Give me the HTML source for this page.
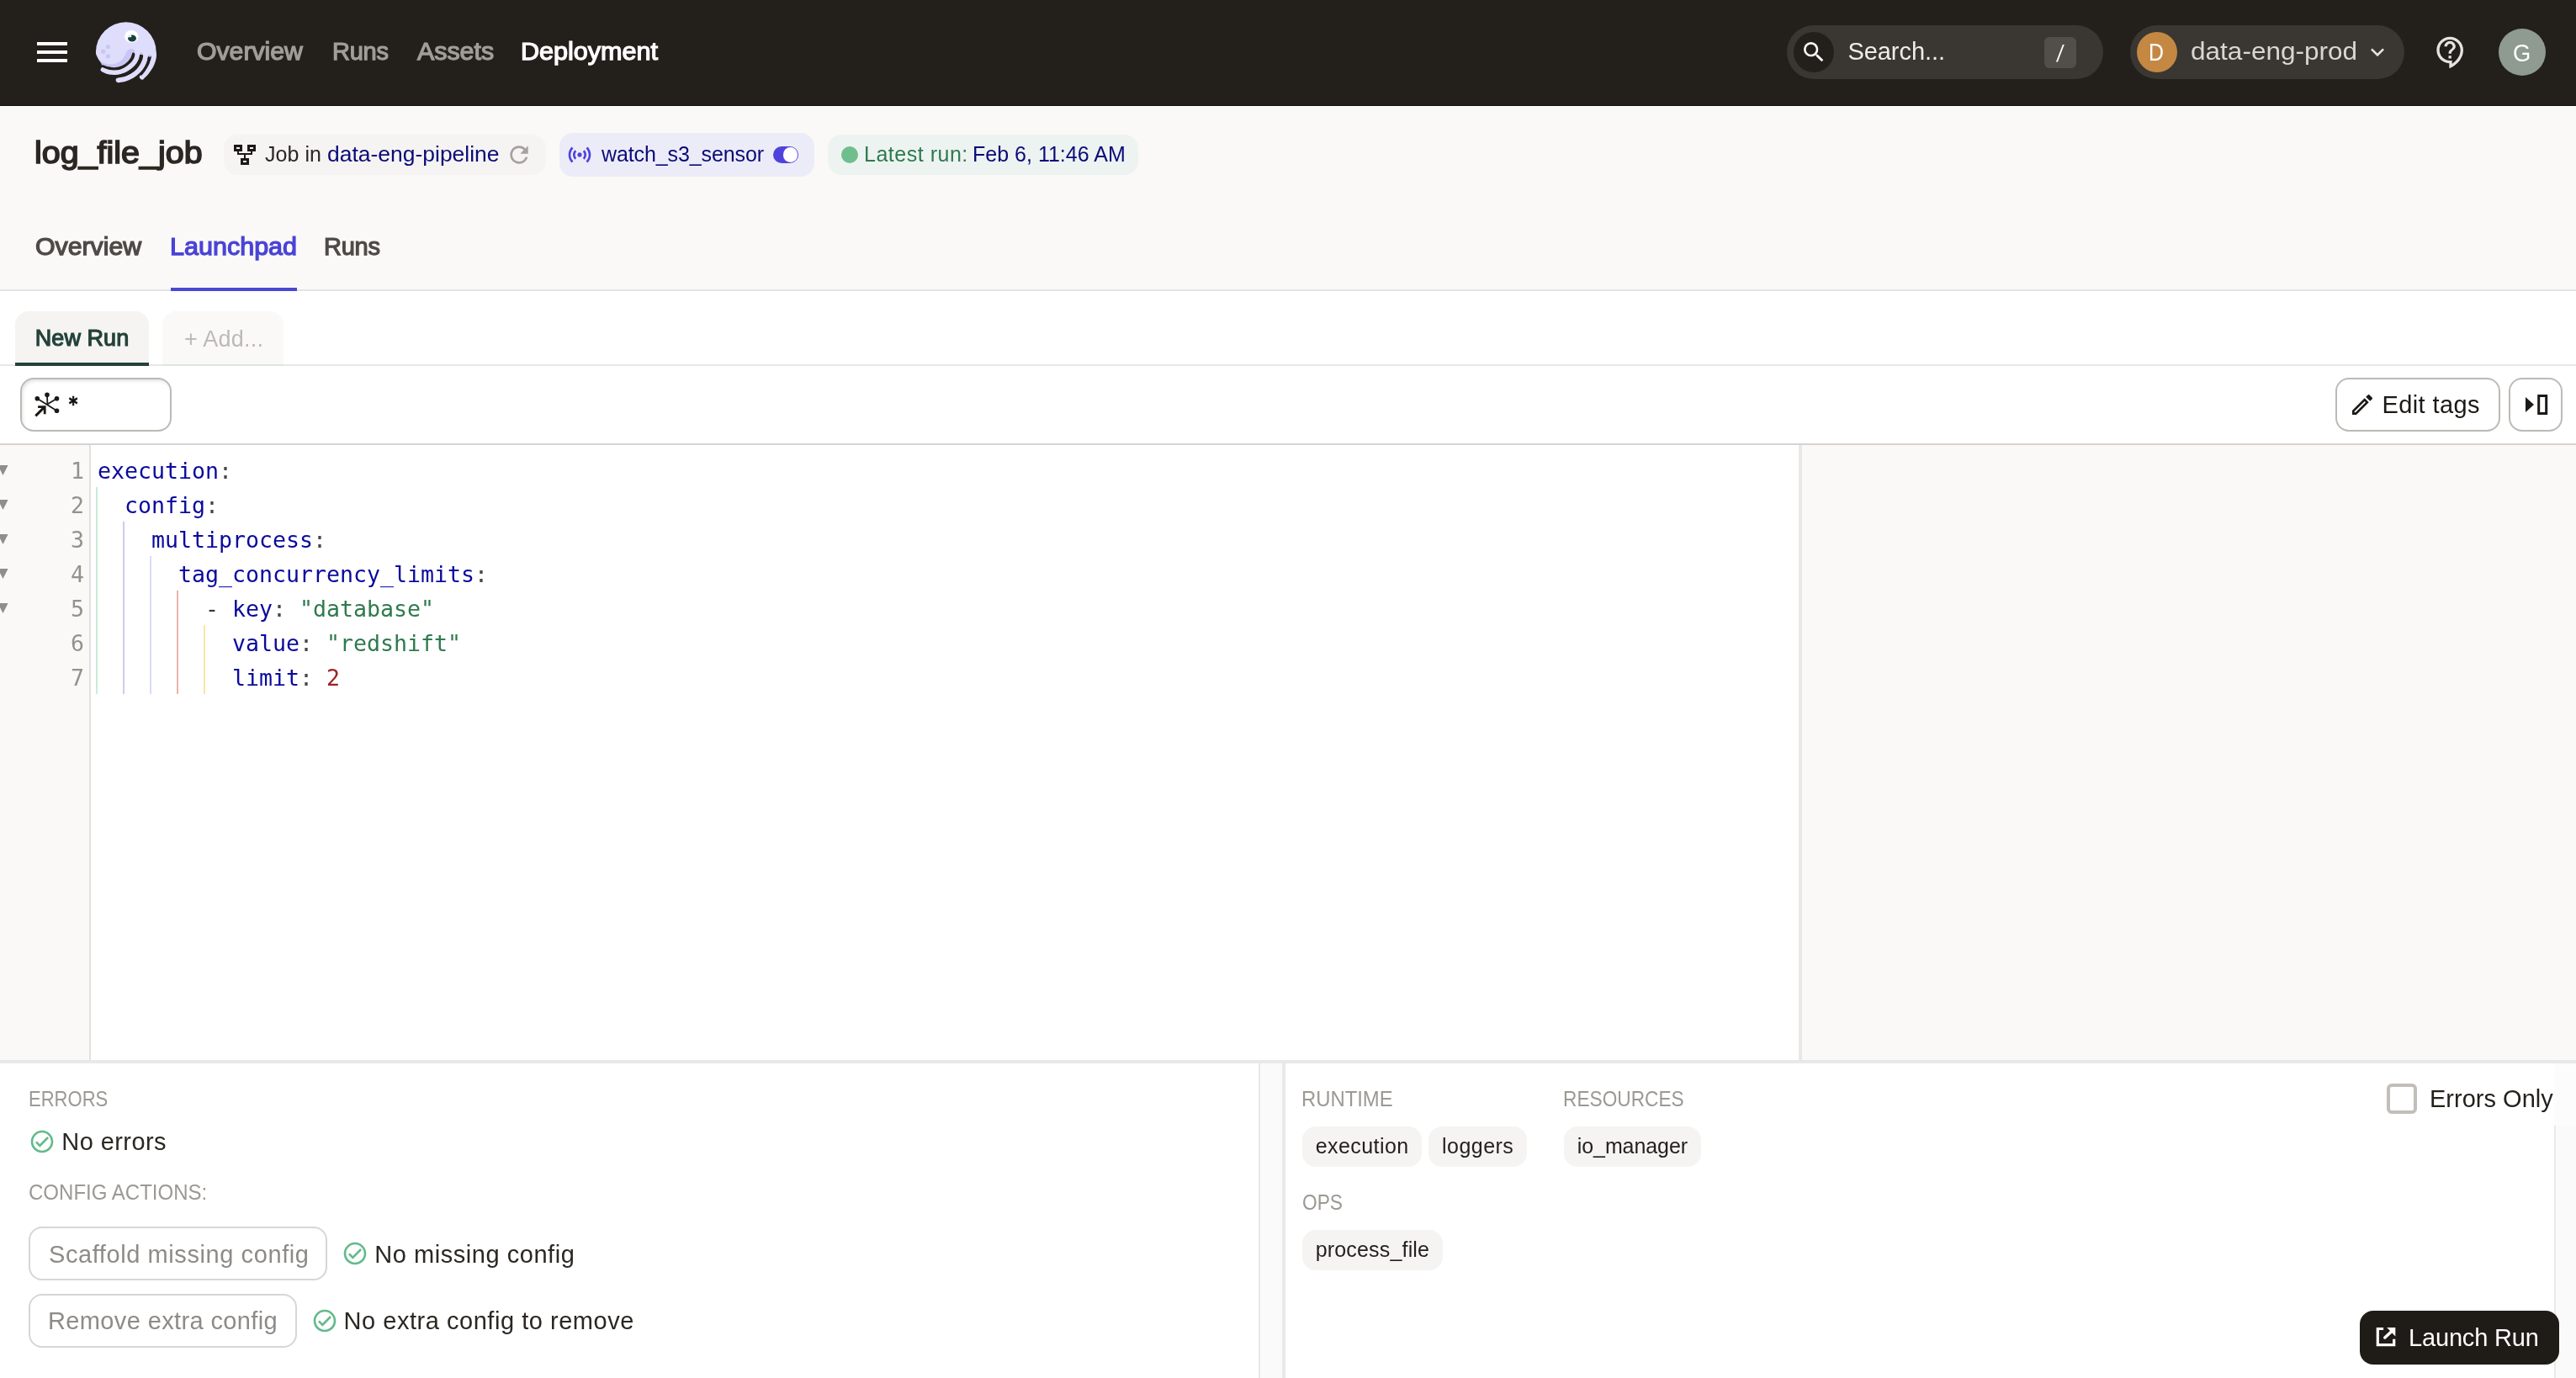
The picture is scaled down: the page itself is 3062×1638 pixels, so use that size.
<!DOCTYPE html>
<html lang="en"><head><meta charset="utf-8"><title>log_file_job - Launchpad</title>
<style>
html,body{margin:0;padding:0;}
body{width:3062px;height:1638px;position:relative;overflow:hidden;background:#fff;font-family:"Liberation Sans",sans-serif;color:#231F1B;}
.a{position:absolute;box-sizing:border-box;}
.t{position:absolute;white-space:pre;display:block;}
svg{position:absolute;overflow:visible;}
.code{position:absolute;margin:0;white-space:pre;font-family:"DejaVu Sans Mono","Liberation Mono",monospace;font-size:26.58px;line-height:41px;height:41px;}
.k{color:#0A0A9E;} .p{color:#4A4743;} .s{color:#2F7A4E;} .n{color:#A02222;} .d{color:#3A3631;}
.ln{position:absolute;left:0;width:100px;text-align:right;color:#95928E;font-family:"DejaVu Sans Mono","Liberation Mono",monospace;font-size:26.58px;line-height:41px;height:41px;}
.pill{position:absolute;box-sizing:border-box;background:#F5F4F2;border-radius:16px;height:48px;}
.tl{position:absolute;left:0;top:0;width:3062px;height:1638px;will-change:transform;}

</style></head>
<body>
<!-- top nav -->
<div class="a" style="left:0;top:0;width:3062px;height:126px;background:#231F1B;border-bottom:1px solid #15120E;"></div>
<!-- hamburger -->
<svg style="left:38px;top:38px" width="48" height="48" viewBox="0 0 24 24"><path d="M3 18h18v-2H3v2zm0-5h18v-2H3v2zm0-7v2h18V6H3z" fill="#fff"/></svg>
<!-- logo -->
<svg style="left:100px;top:14px" width="100" height="96" viewBox="0 0 100 96"><defs><clipPath id="lc"><circle cx="49.8" cy="48.1" r="35.9"/></clipPath></defs><circle cx="49.8" cy="48.1" r="35.9" fill="#DEDDFB"/><path d="M60.8 48.8C60.5 48.3 60.3 46.3 59.4 45.4C58.5 44.6 56.7 43.7 55.3 43.9C53.9 44.1 52.3 45.2 51.1 46.6C50.0 47.9 49.7 50.0 48.5 51.8C47.3 53.7 46.0 56.3 44.0 57.9C41.9 59.5 39.2 61.0 36.4 61.7C33.6 62.4 29.8 62.5 27.0 62.0C24.2 61.5 21.4 60.3 19.4 58.6C17.4 57.0 16.1 54.1 14.9 52.2C13.7 50.3 12.7 48.1 12.3 47.3L-5 100L100 100L66.6 48.8Z" fill="#C9C6F5" clip-path="url(#lc)"/><circle cx="28.4" cy="41.5" r="2.6" fill="#C9C6F5"/><circle cx="22.6" cy="47.2" r="2.6" fill="#C9C6F5"/><circle cx="28.4" cy="52.8" r="2.6" fill="#C9C6F5"/><path d="M58.5 50.0C58.2 50.8 57.8 53.1 56.8 54.9C55.8 56.6 54.5 58.8 52.6 60.5C50.8 62.3 48.6 64.2 45.8 65.4C43.1 66.6 39.4 67.5 36.4 67.7C33.5 67.9 30.4 67.1 28.1 66.6C25.8 66.1 23.8 65.7 22.5 64.7C21.1 63.7 20.9 62.3 19.7 60.5C18.6 58.8 16.8 56.3 15.7 54.1C14.5 51.9 13.8 49.7 12.6 47.3C11.4 44.9 9.2 41.0 8.5 39.8L-5.0 100.0L100.0 100.0L100.0 53.7L89.2 53.7Z" fill="#231F1B"/><path d="M22.5 68.8C23.5 69.3 26.5 70.9 28.9 71.5C31.2 72.0 33.9 72.3 36.4 72.2C38.9 72.2 41.4 71.9 44.0 71.1C46.5 70.3 49.1 68.9 51.5 67.3C53.9 65.7 56.5 63.6 58.3 61.7C60.1 59.7 61.3 57.4 62.1 55.6C62.9 53.9 63.0 52.5 63.2 51.1C63.4 49.7 63.4 47.9 63.4 47.3" fill="none" stroke="#DEDDFB" stroke-width="5.7" stroke-linecap="round"/><path d="M40.6 81.3C41.8 81.1 45.0 81.0 47.7 80.2C50.5 79.3 54.3 77.7 57.2 76.0C60.0 74.3 62.6 72.1 64.7 70.0C66.8 67.8 68.4 65.3 69.6 63.2C70.9 61.0 71.7 58.8 72.3 57.1C72.8 55.4 72.9 54.4 73.0 53.0C73.2 51.6 73.1 49.5 73.1 48.8" fill="none" stroke="#DEDDFB" stroke-width="5.9" stroke-linecap="round"/><path d="M68.9 77.5C69.7 76.6 72.5 74.0 74.2 71.8C75.8 69.7 77.8 66.9 79.1 64.7C80.3 62.5 81.1 60.4 81.7 58.6C82.3 56.9 82.6 55.5 82.8 54.1C83.1 52.7 83.0 51.0 83.0 50.3" fill="none" stroke="#DEDDFB" stroke-width="6.0" stroke-linecap="round"/><circle cx="68.3" cy="49.6" r="1.7" fill="#C9C6F5"/><circle cx="77.7" cy="52.4" r="1.7" fill="#C9C6F5"/><path d="M58.5 50.0C58.2 50.8 57.8 53.1 56.8 54.9C55.8 56.6 54.5 58.8 52.6 60.5C50.8 62.3 48.6 64.2 45.8 65.4C43.1 66.6 39.4 67.5 36.4 67.7C33.5 67.9 30.4 67.1 28.1 66.6C25.8 66.1 23.4 65.0 22.5 64.7" fill="none" stroke="#231F1B" stroke-width="3" stroke-linecap="round"/><path d="M67.7 52.2C67.4 53.4 67.0 56.9 65.8 59.4C64.7 61.8 63.0 64.7 60.9 66.9C58.9 69.1 56.2 71.2 53.4 72.6C50.6 74.1 46.3 74.9 44.0 75.6C41.6 76.3 40.2 76.7 39.4 76.9" fill="none" stroke="#231F1B" stroke-width="3" stroke-linecap="round"/><path d="M77.2 54.9C76.9 56.0 76.5 59.3 75.7 61.7C74.8 64.0 73.2 66.8 71.9 68.8C70.6 70.9 68.4 73.2 67.7 74.1" fill="none" stroke="#231F1B" stroke-width="3" stroke-linecap="round"/><ellipse cx="56.3" cy="29.3" rx="8.2" ry="7.4" fill="#fff"/><path d="M48.6 32.0L65.0 32.0L65.0 38.0L48.6 38.0Z" fill="#DEDDFB" opacity="0"/><ellipse cx="57.0" cy="31.5" rx="5" ry="4" fill="#1A3F3F"/><path d="M51.5 30.5L55.5 27.2L56.5 30.0Z" fill="#fff"/></svg>
<!-- search -->
<div class="a" style="left:2124px;top:30px;width:376px;height:64px;border-radius:32px;background:#3A3631;"></div>
<div class="a" style="left:2132px;top:38px;width:48px;height:48px;border-radius:24px;background:#231F1B;"></div>
<svg style="left:2140px;top:46px" width="32" height="32" viewBox="0 0 24 24"><path d="M15.5 14h-.79l-.28-.27A6.471 6.471 0 0 0 16 9.5 6.5 6.5 0 1 0 9.5 16c1.61 0 3.09-.59 4.23-1.57l.27.28v.79l5 4.99L20.49 19l-4.99-5zm-6 0C7.01 14 5 11.99 5 9.5S7.01 5 9.5 5 14 7.01 14 9.5 11.99 14 9.5 14z" fill="#fff"/></svg>
<div class="a" style="left:2430px;top:44px;width:38px;height:37px;border-radius:6px;background:#524E49;"></div>
<!-- deployment pill -->
<div class="a" style="left:2532px;top:30px;width:326px;height:64px;border-radius:32px;background:#3A3631;"></div>
<div class="a" style="left:2540px;top:38px;width:48px;height:48px;border-radius:24px;background:#C48843;"></div>
<svg style="left:2810px;top:46px" width="32" height="32" viewBox="0 0 24 24"><path d="M16.59 8.59L12 13.17 7.41 8.59 6 10l6 6 6-6z" fill="#E5E3E0"/></svg>
<!-- help -->
<svg style="left:2892.7px;top:41.7px" width="40" height="40" viewBox="0 0 24 24"><path d="M11 23.59v-3.6c-5.01-.26-9-4.42-9-9.49C2 5.26 6.26 1 11.5 1S21 5.26 21 10.5c0 4.95-3.44 9.93-8.57 12.4l-1.43.69zM11.5 3C7.36 3 4 6.36 4 10.5S7.36 18 11.5 18H13v2.3c3.64-2.3 6-6.08 6-9.8C19 6.36 15.64 3 11.5 3zm-1 11.5h2v2h-2zm2-1.500h-2c0-3.250 3-3 3-5 0-1.100-.9-2-2-2s-2 .9-2 2h-2c0-2.210 1.790-4 4-4s4 1.790 4 4c0 2.500-3 2.750-3 5z" fill="#E5E3E0"/></svg>
<!-- avatar -->
<div class="a" style="left:2970px;top:34px;width:56px;height:56px;border-radius:28px;background:#8F9A90;"></div>

<!-- page header -->
<div class="a" style="left:0;top:126px;width:3062px;height:220px;background:#FAF9F7;border-top:1px solid #fff;border-bottom:2px solid #E4E4E3;"></div>
<div class="a" style="left:266px;top:160px;width:383px;height:48px;border-radius:16px;background:#F5F4F2;"></div>
<div class="a" style="left:665px;top:158px;width:303px;height:52px;border-radius:16px;background:#ECECF8;"></div>
<div class="a" style="left:984px;top:160px;width:369px;height:48px;border-radius:16px;background:#EDF3F1;"></div>
<!-- switch -->
<div class="a" style="left:919px;top:174px;width:30px;height:20px;border-radius:10px;background:#4F43DD;"></div>
<div class="a" style="left:931.2px;top:175.4px;width:17.2px;height:17.2px;border-radius:9px;background:#fff;"></div>
<!-- green dot -->
<div class="a" style="left:1000px;top:174px;width:20px;height:20px;border-radius:10px;background:#6FBF8E;"></div>

<!-- tab underline -->
<div class="a" style="left:203px;top:342px;width:150px;height:4px;background:#4B47D5;"></div>

<!-- sub tabs -->
<div class="a" style="left:0;top:433px;width:3062px;height:2px;background:#E7E7E5;"></div>
<div class="a" style="left:18px;top:370px;width:159px;height:65px;border-radius:16px 16px 0 0;background:#F5F4F2;border-bottom:4px solid #25413A;"></div>
<div class="a" style="left:193px;top:370px;width:144px;height:65px;border-radius:16px 16px 0 0;background:#FAF9F7;border-bottom:2px solid #DCE5E0;"></div>

<!-- toolbar -->
<div class="a" style="left:24px;top:449px;width:180px;height:64px;border-radius:16px;border:2px solid #BDBAB6;background:#fff;box-shadow:inset 2px 3px 5px -2px rgba(0,0,0,0.16);"></div>
<div class="a" style="left:2776px;top:449px;width:196px;height:64px;border-radius:16px;border:2px solid #BDBAB6;background:#fff;"></div>
<div class="a" style="left:2982px;top:449px;width:64px;height:64px;border-radius:16px;border:2px solid #BDBAB6;background:#fff;"></div>
<svg style="left:3000px;top:467px" width="30" height="28" viewBox="0 0 30 28"><path d="M2 5 L12 14 L2 23 Z" fill="#1C1917"/><rect x="17.7" y="3.5" width="9" height="21" fill="none" stroke="#1C1917" stroke-width="3"/></svg>
<div class="a" style="left:0;top:527px;width:3062px;height:2px;background:#D6D4D1;"></div>

<!-- editor -->
<div class="a" style="left:0;top:529px;width:108px;height:731px;background:#FAF9F7;border-right:2px solid #E3E1DE;"></div>
<div class="a" style="left:2138px;top:529px;width:4px;height:731px;background:#E8E8E8;"></div>
<div class="a" style="left:2142px;top:529px;width:920px;height:731px;background:#FAF9F7;"></div>
<!-- indent guides -->
<div class="a" style="left:114px;top:579px;width:2px;height:246px;background:#C9EBD9;"></div>
<div class="a" style="left:146px;top:620px;width:2px;height:205px;background:#CDCDEB;"></div>
<div class="a" style="left:178px;top:661px;width:2px;height:164px;background:#DADAFA;"></div>
<div class="a" style="left:210px;top:702px;width:2px;height:123px;background:#E8B4AE;"></div>
<div class="a" style="left:242px;top:743px;width:2px;height:82px;background:#F8E6A8;"></div>
<!-- fold arrows + line numbers -->
<svg style="left:0;top:553.1px" width="12" height="13" viewBox="0 0 12 13"><path d="M-2.600 0H9.600L3.500 11.900Z" fill="#8E8E8E"/></svg>
<svg style="left:0;top:594.1px" width="12" height="13" viewBox="0 0 12 13"><path d="M-2.600 0H9.600L3.500 11.900Z" fill="#8E8E8E"/></svg>
<svg style="left:0;top:635.1px" width="12" height="13" viewBox="0 0 12 13"><path d="M-2.600 0H9.600L3.500 11.900Z" fill="#8E8E8E"/></svg>
<svg style="left:0;top:676.1px" width="12" height="13" viewBox="0 0 12 13"><path d="M-2.600 0H9.600L3.500 11.900Z" fill="#8E8E8E"/></svg>
<svg style="left:0;top:717.1px" width="12" height="13" viewBox="0 0 12 13"><path d="M-2.600 0H9.600L3.500 11.900Z" fill="#8E8E8E"/></svg>
<div class="tl">
<div class="ln" style="top:538.6px">1</div>
<div class="ln" style="top:579.6px">2</div>
<div class="ln" style="top:620.6px">3</div>
<div class="ln" style="top:661.6px">4</div>
<div class="ln" style="top:702.6px">5</div>
<div class="ln" style="top:743.6px">6</div>
<div class="ln" style="top:784.6px">7</div>
<pre class="code" style="left:115.9px;top:538.6px"><span class="k">execution</span><span class="p">:</span></pre>
<pre class="code" style="left:115.9px;top:579.6px">  <span class="k">config</span><span class="p">:</span></pre>
<pre class="code" style="left:115.9px;top:620.6px">    <span class="k">multiprocess</span><span class="p">:</span></pre>
<pre class="code" style="left:115.9px;top:661.6px">      <span class="k">tag_concurrency_limits</span><span class="p">:</span></pre>
<pre class="code" style="left:115.9px;top:702.6px">        <span class="d">-</span> <span class="k">key</span><span class="p">:</span> <span class="s">"database"</span></pre>
<pre class="code" style="left:115.9px;top:743.6px">          <span class="k">value</span><span class="p">:</span> <span class="s">"redshift"</span></pre>
<pre class="code" style="left:115.9px;top:784.6px">          <span class="k">limit</span><span class="p">:</span> <span class="n">2</span></pre>
</div>

<!-- bottom split -->
<div class="a" style="left:0;top:1260px;width:3062px;height:4px;background:#E8E8E8;"></div>
<div class="a" style="left:1496px;top:1264px;width:2px;height:374px;background:#E8E8E8;"></div>
<div class="a" style="left:1498px;top:1264px;width:26px;height:374px;background:#FAFAFA;"></div>
<div class="a" style="left:1524px;top:1264px;width:4px;height:374px;background:#E8E8E8;"></div>
<div class="a" style="left:3036px;top:1264px;width:26px;height:74px;background:#FCFCFC;"></div>
<div class="a" style="left:3036px;top:1338px;width:26px;height:300px;background:#FAFAFA;border-left:2px solid #EAEAEA;"></div>

<!-- bottom-left -->
<div class="a" style="left:34px;top:1458px;width:355px;height:64px;border-radius:16px;border:2px solid #D8D6D3;background:#fff;"></div>
<div class="a" style="left:34px;top:1538px;width:319px;height:64px;border-radius:16px;border:2px solid #D8D6D3;background:#fff;"></div>

<!-- bottom-right pills -->
<div class="pill" style="left:1548px;top:1339px;width:142px;"></div>
<div class="pill" style="left:1698px;top:1339px;width:117px;"></div>
<div class="pill" style="left:1859px;top:1339px;width:163px;"></div>
<div class="pill" style="left:1548px;top:1462px;width:167px;"></div>
<!-- checkbox -->
<div class="a" style="left:2837px;top:1288px;width:36px;height:36px;border-radius:6px;border:4px solid #C2BFBB;background:#fff;"></div>
<!-- launch button -->
<div class="a" style="left:2805px;top:1558px;width:237px;height:64px;border-radius:16px;background:#1F1C18;"></div>
<svg style="left:2820px;top:1574px" width="32" height="32" viewBox="2820 1574 32 32"><path d="M2833.100 1579.500H2826.300V1598.600H2845.700V1591.800" fill="none" stroke="#fff" stroke-width="3.200"/><path d="M2837.200 1577.900H2847.300V1588.400Z" fill="#fff"/><path d="M2834.800 1590L2843.500 1582" fill="none" stroke="#fff" stroke-width="3.500" stroke-linecap="round"/></svg>
<!-- job icon -->
<svg style="left:270px;top:160px" width="48" height="48" viewBox="270 160 48 48"><g fill="none" stroke="#1C1917"><rect x="279.5" y="173.5" width="7" height="5" stroke-width="3"/><rect x="295.5" y="173.5" width="7" height="5" stroke-width="3"/><rect x="287.500" y="189.500" width="7" height="5" stroke-width="3"/><path d="M283 180V183H299V180M291 183V188" stroke-width="2"/></g></svg>
<!-- refresh -->
<svg style="left:600.700px;top:167.700px" width="32" height="32" viewBox="0 0 24 24"><path d="M17.65 6.35A7.958 7.958 0 0 0 12 4c-4.42 0-7.990 3.580-7.990 8s3.570 8 7.990 8c3.730 0 6.840-2.550 7.730-6h-2.080A5.990 5.990 0 0 1 12 18c-3.310 0-6-2.690-6-6s2.690-6 6-6c1.660 0 3.140.69 4.220 1.780L13 11h7V4l-2.350 2.350z" fill="#A5A19D"/></svg>
<!-- sensor -->
<svg style="left:672.700px;top:167.800px" width="32" height="32" viewBox="0 0 24 24"><path d="M7.760 16.240C6.670 15.160 6 13.660 6 12s.67-3.160 1.760-4.240l1.420 1.420C8.450 9.900 8 10.900 8 12c0 1.100.45 2.100 1.170 2.830l-1.410 1.410zm8.480 0C17.330 15.160 18 13.660 18 12s-.67-3.160-1.760-4.240l-1.420 1.420C15.550 9.900 16 10.900 16 12c0 1.100-.45 2.100-1.170 2.830l1.410 1.410zM12 10c-1.100 0-2 .9-2 2s.9 2 2 2 2-.9 2-2-.9-2-2-2zm8 2c0 2.210-.9 4.210-2.350 5.650l1.420 1.420C20.880 17.260 22 14.760 22 12s-1.120-5.260-2.930-7.070l-1.420 1.420C19.100 7.790 20 9.790 20 12zM6.350 6.350L4.930 4.930C3.120 6.740 2 9.240 2 12s1.120 5.260 2.930 7.070l1.420-1.420C4.900 16.210 4 14.210 4 12s.9-4.210 2.350-5.650z" fill="#4F43DD"/></svg>
<!-- op selector icon -->
<svg style="left:30px;top:455px" width="80" height="52" viewBox="30 455 80 52"><g fill="#1C1917"><circle cx="56" cy="469.300" r="2.800"/><circle cx="44.300" cy="473.700" r="2.800"/><circle cx="67.500" cy="473.700" r="2.800"/><circle cx="67.500" cy="488.200" r="2.800"/></g><g fill="none" stroke="#1C1917"><path d="M44.300 473.700L67.500 488.200M56 469.300L56.400 480.300M67.500 473.700L56.400 480.500" stroke-width="1.800"/><path d="M42.300 494.400L52.600 484.100" stroke-width="3"/><path d="M45.100 483.600H53.200V492.300" stroke-width="2.800"/></g></svg>
<!-- pencil -->
<svg style="left:2792px;top:465px" width="32" height="32" viewBox="0 0 24 24"><path d="M14.060 9.020l.92.92L5.920 19H5v-.92l9.060-9.060M17.660 3c-.25 0-.51.1-.7.290l-1.830 1.830 3.750 3.750 1.830-1.830a.996.996 0 0 0 0-1.410l-2.340-2.340c-.2-.2-.45-.29-.71-.29zm-3.600 3.190L3 17.250V21h3.750L17.810 9.940l-3.750-3.750z" fill="#1C1917"/></svg>
<!-- check circles -->
<svg style="left:34px;top:1341px" width="32" height="32" viewBox="0 0 24 24"><path d="M12 2C6.480 2 2 6.480 2 12s4.480 10 10 10 10-4.480 10-10S17.520 2 12 2zm0 18c-4.410 0-8-3.590-8-8s3.590-8 8-8 8 3.590 8 8-3.590 8-8 8zm4.590-12.420L10 14.170l-2.590-2.580L6 13l4 4 8-8-1.410-1.420z" fill="#62BA8A"/></svg>
<svg style="left:406px;top:1474px" width="32" height="32" viewBox="0 0 24 24"><path d="M12 2C6.480 2 2 6.480 2 12s4.480 10 10 10 10-4.480 10-10S17.520 2 12 2zm0 18c-4.410 0-8-3.590-8-8s3.590-8 8-8 8 3.590 8 8-3.590 8-8 8zm4.590-12.420L10 14.170l-2.590-2.580L6 13l4 4 8-8-1.410-1.420z" fill="#62BA8A"/></svg>
<svg style="left:370.200px;top:1554px" width="32" height="32" viewBox="0 0 24 24"><path d="M12 2C6.480 2 2 6.480 2 12s4.480 10 10 10 10-4.480 10-10S17.520 2 12 2zm0 18c-4.410 0-8-3.590-8-8s3.590-8 8-8 8 3.590 8 8-3.590 8-8 8zm4.590-12.420L10 14.170l-2.590-2.580L6 13l4 4 8-8-1.410-1.420z" fill="#62BA8A"/></svg>

<!-- text -->
<div class="tl">
<span class="t" style="left:234.41px;top:46.98px;font-size:29px;line-height:29px;color:#A19D98;-webkit-text-stroke:1.25px #A19D98;transform:scaleX(1.0412);transform-origin:0 0;">Overview</span>
<span class="t" style="left:394.92px;top:46.98px;font-size:29px;line-height:29px;color:#A19D98;-webkit-text-stroke:1.25px #A19D98;letter-spacing:-0.217px;">Runs</span>
<span class="t" style="left:495.85px;top:46.98px;font-size:29px;line-height:29px;color:#A19D98;-webkit-text-stroke:1.25px #A19D98;transform:scaleX(1.0470);transform-origin:0 0;">Assets</span>
<span class="t" style="left:618.95px;top:46.98px;font-size:29px;line-height:29px;color:#FFFFFF;-webkit-text-stroke:1.25px #FFFFFF;transform:scaleX(1.0537);transform-origin:0 0;">Deployment</span>
<span class="t" style="left:2196.40px;top:46.50px;font-size:29px;line-height:29px;color:#EFEDEA;letter-spacing:-0.051px;">Search...</span>
<span class="t" style="left:2443.05px;top:51.20px;font-size:24px;line-height:24px;color:#FFFFFF;font-family:'DejaVu Sans Mono', 'Liberation Mono', monospace;transform:scaleX(0.8497);transform-origin:0 0;">/</span>
<span class="t" style="left:2554.19px;top:47.60px;font-size:29px;line-height:29px;color:#FFFFFF;transform:scaleX(0.8551);transform-origin:0 0;">D</span>
<span class="t" style="left:2604.11px;top:47.40px;font-size:29px;line-height:29px;color:#DAD7D3;transform:scaleX(1.0874);transform-origin:0 0;">data-eng-prod</span>
<span class="t" style="left:2987.36px;top:48.90px;font-size:29px;line-height:29px;color:#FFFFFF;transform:scaleX(0.9447);transform-origin:0 0;">G</span>
<span class="t" style="left:41.44px;top:163.04px;font-size:37.5px;line-height:37.5px;color:#2B2723;-webkit-text-stroke:1.61px #2B2723;transform:scaleX(1.0520);transform-origin:0 0;">log_file_job</span>
<span class="t" style="left:315.00px;top:170.60px;font-size:25px;line-height:25px;color:#2B2723;letter-spacing:0.037px;">Job in</span>
<span class="t" style="left:388.84px;top:170.60px;font-size:25px;line-height:25px;color:#0B0B78;transform:scaleX(1.0586);transform-origin:0 0;">data-eng-pipeline</span>
<span class="t" style="left:715.00px;top:170.60px;font-size:25px;line-height:25px;color:#0B0B78;letter-spacing:-0.103px;">watch_s3_sensor</span>
<span class="t" style="left:1027.00px;top:170.60px;font-size:25px;line-height:25px;color:#2E7A50;letter-spacing:0.511px;">Latest run:</span>
<span class="t" style="left:1156.00px;top:170.60px;font-size:25px;line-height:25px;color:#0B0B78;letter-spacing:0.009px;">Feb 6, 11:46 AM</span>
<span class="t" style="left:42.31px;top:278.68px;font-size:29px;line-height:29px;color:#4E4A46;-webkit-text-stroke:1.25px #4E4A46;transform:scaleX(1.0437);transform-origin:0 0;">Overview</span>
<span class="t" style="left:202.25px;top:278.68px;font-size:29px;line-height:29px;color:#4A43D6;-webkit-text-stroke:1.25px #4A43D6;transform:scaleX(1.0526);transform-origin:0 0;">Launchpad</span>
<span class="t" style="left:384.92px;top:278.68px;font-size:29px;line-height:29px;color:#4E4A46;-webkit-text-stroke:1.25px #4E4A46;letter-spacing:-0.183px;">Runs</span>
<span class="t" style="left:41.78px;top:389.22px;font-size:27px;line-height:27px;color:#24423A;-webkit-text-stroke:1.16px #24423A;letter-spacing:0.068px;">New Run</span>
<span class="t" style="left:218.90px;top:389.80px;font-size:27px;line-height:27px;color:#BDBAB6;letter-spacing:0.268px;">+ Add...</span>
<span class="t" style="left:80.83px;top:468.50px;font-size:23px;line-height:23px;color:#111111;font-weight:700;-webkit-text-stroke:0.70px #111111;font-family:'DejaVu Sans Mono', 'Liberation Mono', monospace;transform:scaleX(0.8810);transform-origin:0 0;">*</span>
<span class="t" style="left:2831.50px;top:466.90px;font-size:29px;line-height:29px;color:#1C1917;letter-spacing:0.382px;">Edit tags</span>
<span class="t" style="left:33.54px;top:1294.10px;font-size:25px;line-height:25px;color:#9C9994;transform:scaleX(0.8812);transform-origin:0 0;">ERRORS</span>
<span class="t" style="left:73.30px;top:1342.80px;font-size:29px;line-height:29px;color:#2B2723;letter-spacing:0.418px;">No errors</span>
<span class="t" style="left:34.34px;top:1405.40px;font-size:25px;line-height:25px;color:#9C9994;transform:scaleX(0.9609);transform-origin:0 0;">CONFIG ACTIONS:</span>
<span class="t" style="left:58.00px;top:1476.50px;font-size:29px;line-height:29px;color:#8E8B87;letter-spacing:0.585px;">Scaffold missing config</span>
<span class="t" style="left:445.20px;top:1476.50px;font-size:29px;line-height:29px;color:#2B2723;letter-spacing:0.547px;">No missing config</span>
<span class="t" style="left:57.00px;top:1556.30px;font-size:29px;line-height:29px;color:#8E8B87;letter-spacing:0.376px;">Remove extra config</span>
<span class="t" style="left:408.60px;top:1556.30px;font-size:29px;line-height:29px;color:#2B2723;letter-spacing:0.528px;">No extra config to remove</span>
<span class="t" style="left:1547.39px;top:1294.10px;font-size:25px;line-height:25px;color:#9C9994;transform:scaleX(0.9540);transform-origin:0 0;">RUNTIME</span>
<span class="t" style="left:1858.08px;top:1294.10px;font-size:25px;line-height:25px;color:#9C9994;transform:scaleX(0.9075);transform-origin:0 0;">RESOURCES</span>
<span class="t" style="left:1563.70px;top:1350.00px;font-size:25px;line-height:25px;color:#231F1B;letter-spacing:0.434px;">execution</span>
<span class="t" style="left:1714.00px;top:1350.00px;font-size:25px;line-height:25px;color:#231F1B;letter-spacing:0.467px;">loggers</span>
<span class="t" style="left:1874.80px;top:1350.00px;font-size:25px;line-height:25px;color:#231F1B;letter-spacing:-0.090px;">io_manager</span>
<span class="t" style="left:1548.39px;top:1417.10px;font-size:25px;line-height:25px;color:#9C9994;transform:scaleX(0.9096);transform-origin:0 0;">OPS</span>
<span class="t" style="left:1563.70px;top:1472.50px;font-size:25px;line-height:25px;color:#231F1B;letter-spacing:0.173px;">process_file</span>
<span class="t" style="left:2888.00px;top:1291.50px;font-size:29px;line-height:29px;color:#231F1B;letter-spacing:0.016px;">Errors Only</span>
<span class="t" style="left:2863.10px;top:1575.70px;font-size:29px;line-height:29px;color:#FFFFFF;letter-spacing:-0.186px;">Launch Run</span>
</div>
</body></html>
